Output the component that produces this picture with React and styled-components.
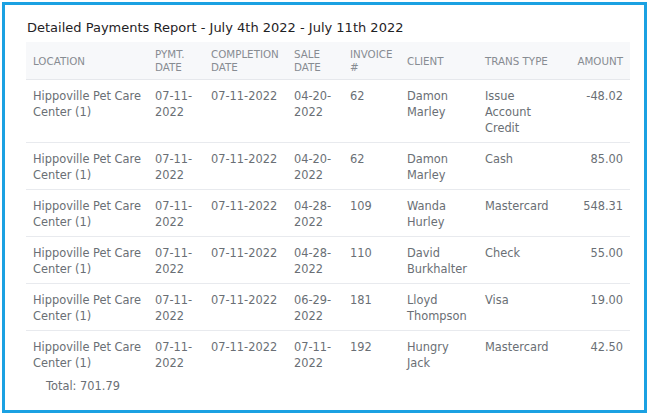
import React from "react";
import styled, { createGlobalStyle } from "styled-components";

const Global = createGlobalStyle`
  html, body { margin: 0; padding: 0; background: #ffffff; }
  body { font-family: "DejaVu Sans", "Liberation Sans", sans-serif; }
`;

const Page = styled.div`
  width: 650px;
  height: 417px;
  padding: 2px 3px 4px 2px;
  box-sizing: border-box;
`;

const Frame = styled.div`
  width: 100%;
  height: 100%;
  box-sizing: border-box;
  border: 3px solid #1ba1e2;
  padding: 14px 17px 0 21px;
`;

const Title = styled.h1`
  margin: 0 0 5px 1px;
  font-size: 13px;
  line-height: 18px;
  font-weight: normal;
  color: #1f2225;
`;

const Table = styled.table`
  width: 604px;
  border-collapse: collapse;
  table-layout: fixed;
`;

const HeadCell = styled.th`
  background: #f7f8fa;
  color: #878c92;
  font-weight: normal;
  font-size: 10.3px;
  line-height: 13px;
  text-transform: uppercase;
  text-align: ${(p) => (p.$right ? "right" : "left")};
  vertical-align: middle;
  padding: 6px 7px 5px 7px;
  height: 26px;
  border-bottom: 1px solid #e6e8ec;
  white-space: ${(p) => (p.$nowrap ? "nowrap" : "normal")};
`;

const Row = styled.tr`
  border-bottom: ${(p) => (p.$last ? "none" : "1px solid #e8eaee")};
`;

const Cell = styled.td`
  color: #6a6f75;
  font-size: 11.4px;
  line-height: 16px;
  vertical-align: top;
  text-align: ${(p) => (p.$right ? "right" : "left")};
  padding: 8px ${(p) => (p.$tight ? "2px" : "7px")} 6px 7px;
`;

const Total = styled.div`
  margin: 1px 0 0 20px;
  color: #6a6f75;
  font-size: 11.4px;
  line-height: 16px;
`;

const cols = [122, 56, 83, 56, 57, 78, 78, 74];

const headers = [
  "Location",
  "Pymt. Date",
  "Completion Date",
  "Sale Date",
  "Invoice #",
  "Client",
  "Trans Type",
  "Amount",
];

const rows = [
  ["07-11-2022", "04-20-2022", "62", "Damon Marley", "Issue Account Credit", "-48.02"],
  ["07-11-2022", "04-20-2022", "62", "Damon Marley", "Cash", "85.00"],
  ["07-11-2022", "04-28-2022", "109", "Wanda Hurley", "Mastercard", "548.31"],
  ["07-11-2022", "04-28-2022", "110", "David Burkhalter", "Check", "55.00"],
  ["07-11-2022", "06-29-2022", "181", "Lloyd Thompson", "Visa", "19.00"],
  ["07-11-2022", "07-11-2022", "192", "Hungry Jack", "Mastercard", "42.50"],
];

export default function App() {
  return (
    <>
      <Global />
      <Page>
        <Frame>
          <Title>Detailed Payments Report - July 4th 2022 - July 11th 2022</Title>
          <Table>
            <colgroup>
              {cols.map((w, i) => (
                <col key={i} style={{ width: w }} />
              ))}
            </colgroup>
            <thead>
              <tr>
                {headers.map((h, i) => (
                  <HeadCell
                    key={h}
                    $right={i === headers.length - 1}
                    $nowrap={h === "Trans Type"}
                  >
                    {h}
                  </HeadCell>
                ))}
              </tr>
            </thead>
            <tbody>
              {rows.map((r, i) => (
                <Row key={i} $last={i === rows.length - 1}>
                  <Cell $tight>Hippoville Pet Care Center (1)</Cell>
                  <Cell $tight>07-11-2022</Cell>
                  <Cell>{r[0]}</Cell>
                  <Cell $tight>{r[1]}</Cell>
                  <Cell>{r[2]}</Cell>
                  <Cell>{r[3]}</Cell>
                  <Cell>{r[4]}</Cell>
                  <Cell $right>{r[5]}</Cell>
                </Row>
              ))}
            </tbody>
          </Table>
          <Total>Total: 701.79</Total>
        </Frame>
      </Page>
    </>
  );
}
